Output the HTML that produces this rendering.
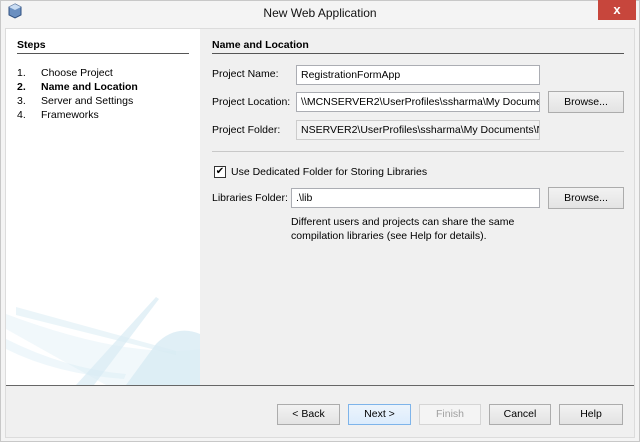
<!DOCTYPE html>
<html><head><style>
*{margin:0;padding:0;box-sizing:border-box}
body{width:640px;height:445px;background:#fff;font-family:"Liberation Sans",sans-serif;font-size:10.5px;color:#000;position:relative;overflow:hidden}
.a{position:absolute}
.frame{left:0;top:0;width:640px;height:442px;background:#f4f4f4;border:1px solid #c8c8c8}
.inp{position:absolute;background:#fff;border:1px solid #abadb3;height:20px;padding:3px 4px;white-space:nowrap;overflow:hidden;font-size:10.5px}
.btn{position:absolute;height:21px;border:1px solid #acacac;background:linear-gradient(#f2f2f2,#e3e3e3);text-align:center;line-height:19px;font-size:10.5px}
</style></head><body>
<div class="a frame"></div>
<svg class="a" style="left:8px;top:3px" width="14" height="16" viewBox="0 0 14 16"><path d="M7 1 L13 4 L13 12 L7 15 L1 12 L1 4Z" fill="#6a8fc0" stroke="#2f4f7f"/><path d="M7 1 L13 4 L7 7 L1 4Z" fill="#c9dcf2"/></svg>
<div class="a" style="left:0;top:6px;width:640px;text-align:center;font-size:12px;color:#111">New Web Application</div>
<div class="a" style="left:598px;top:0;width:38px;height:20px;background:#c7463c;color:#fff;text-align:center;font-size:13px;line-height:19px;font-weight:bold">x</div>
<div class="a" style="left:5px;top:28px;width:630px;height:410px;background:#f0f0f0;border:1px solid #dcdcdc"></div>
<div class="a" style="left:6px;top:29px;width:194px;height:356px;background:#fff;overflow:hidden">
<svg width="194" height="356"><g fill="#d8ebf4">
<path d="M0 300 L100 356 L194 356 L194 320 Q120 330 0 285Z" opacity=".35"/>
<path d="M70 356 L150 268 L153 270 L88 356Z" opacity=".7"/>
<path d="M194 305 Q170 295 150 315 L120 356 L194 356Z" opacity=".8"/>
<path d="M0 310 Q60 340 120 345 L118 350 Q50 345 0 320Z" opacity=".4"/>
<path d="M10 278 L170 322 L170 326 L10 286Z" opacity=".5"/>
</g></svg></div>
<div class="a" style="left:17px;top:39px;font-weight:bold">Steps</div>
<div class="a" style="left:17px;top:53px;width:172px;border-top:1px solid #555"></div>
<div class="a" style="left:17px;top:66px;line-height:14px">1.<br><b>2.</b><br>3.<br>4.</div>
<div class="a" style="left:41px;top:66px;line-height:14px;white-space:nowrap">Choose Project<br><b>Name and Location</b><br>Server and Settings<br>Frameworks</div>
<div class="a" style="left:212px;top:39px;font-weight:bold">Name and Location</div>
<div class="a" style="left:212px;top:53px;width:412px;border-top:1px solid #555"></div>
<div class="a" style="left:212px;top:68px">Project Name:</div>
<div class="inp" style="left:296px;top:65px;width:244px">RegistrationFormApp</div>
<div class="a" style="left:212px;top:96px">Project Location:</div>
<div class="inp" style="left:296px;top:92px;width:244px">\\MCNSERVER2\UserProfiles\ssharma\My Documents</div>
<div class="btn" style="left:548px;top:91px;width:76px;height:22px;line-height:20px">Browse...</div>
<div class="a" style="left:212px;top:124px">Project Folder:</div>
<div class="inp" style="left:296px;top:120px;width:244px;background:#f3f3f3;border-color:#ccc">NSERVER2\UserProfiles\ssharma\My Documents\Ne</div>
<div class="a" style="left:212px;top:151px;width:412px;border-top:1px solid #c8c8c8"></div>
<div class="a" style="left:214px;top:166px;width:12px;height:12px;border:1px solid #333;background:#fff;font-size:10px;line-height:10px;text-align:center">✔</div>
<div class="a" style="left:231px;top:166px">Use Dedicated Folder for Storing Libraries</div>
<div class="a" style="left:212px;top:192px">Libraries Folder:</div>
<div class="inp" style="left:291px;top:188px;width:249px">.\lib</div>
<div class="btn" style="left:548px;top:187px;width:76px;height:22px;line-height:20px">Browse...</div>
<div class="a" style="left:291px;top:215px;line-height:14px">Different users and projects can share the same<br>compilation libraries (see Help for details).</div>
<div class="a" style="left:6px;top:385px;width:628px;border-top:1px solid #666"></div>
<div class="btn" style="left:277px;top:404px;width:63px">&lt; Back</div>
<div class="btn" style="left:348px;top:404px;width:63px;border-color:#7eb4ea;background:linear-gradient(#ecf4fc,#dcecfc)">Next &gt;</div>
<div class="btn" style="left:419px;top:404px;width:62px;color:#a0a0a0;border-color:#d5d5d5;background:#f4f4f4">Finish</div>
<div class="btn" style="left:489px;top:404px;width:62px">Cancel</div>
<div class="btn" style="left:559px;top:404px;width:64px">Help</div>
</body></html>
